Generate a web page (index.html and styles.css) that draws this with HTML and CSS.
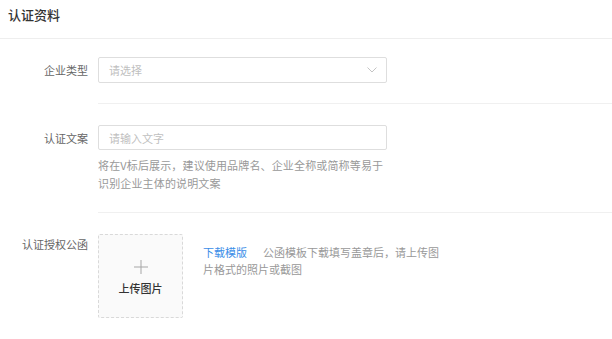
FILE: index.html
```html
<!DOCTYPE html>
<html lang="zh-CN">
<head>
<meta charset="utf-8">
<link rel="stylesheet" href="styles.css">
</head>
<body>
<div class="page">
  <div class="header"><span class="title">认证资料</span></div>
  <div class="form">
    <div class="row">
      <div class="label">企业类型</div>
      <div class="content">
        <div class="select">
          <span class="placeholder">请选择</span>
          <svg class="chevron" width="10" height="6" viewBox="0 0 10 6"><path d="M0.5 0.5 L5 5 L9.5 0.5" fill="none" stroke="#c4c4c4" stroke-width="1"/></svg>
        </div>
      </div>
    </div>
    <div class="row">
      <div class="label">认证文案</div>
      <div class="content">
        <div class="input"><span class="placeholder">请输入文字</span></div>
        <p class="help">将在V标后展示，建议使用品牌名、企业全称或简称等易于识别企业主体的说明文案</p>
      </div>
    </div>
    <div class="row row-last">
      <div class="label label-top">认证授权公函</div>
      <div class="content upload-row">
        <div class="upload">
          <svg class="plus" width="14" height="14" viewBox="0 0 14 14"><path d="M7 0 V14 M0 7 H14" stroke="#a6a6a6" stroke-width="1"/></svg>
          <span class="upload-text">上传图片</span>
        </div>
        <p class="upload-tip"><span class="link">下载模版</span>公函模板下载填写盖章后，请上传图片格式的照片或截图</p>
      </div>
    </div>
  </div>
</div>
</body>
</html>
```

FILE: styles.css
```css
* { box-sizing: border-box; }
html, body { margin: 0; padding: 0; background: #fff; }
body {
  font-family: "Noto Sans CJK SC", "Noto Sans", sans-serif;
  font-size: 11px;
  color: #666;
}
.page { width: 612px; }
.header {
  height: 39px;
  padding: 0 8px;
  border-bottom: 1px solid #eeeeee;
  display: flex;
  align-items: center;
}
.title {
  font-size: 13px;
  font-weight: 500;
  color: #333;
  line-height: 20px;
  margin-top: -8px;
}
.form { padding-top: 18px; }
.row { display: flex; gap: 10px; }
.label {
  width: 88px;
  flex: none;
  text-align: right;
  line-height: 26px;
  color: #666;
  padding-top: 0;
}
.label-top { line-height: 20px; }
.content {
  flex: 1;
  border-bottom: 1px solid #f0f0f0;
  padding-bottom: 20px;
}
.row + .row .content { padding-top: 21px; }
.row + .row .label { margin-top: 21px; }
.row-last .content { border-bottom: none; padding-top: 19px; }
.row-last .label { margin-top: 19px; }
.select, .input {
  width: 289px;
  height: 26px;
  border: 1px solid #dedede;
  border-radius: 2px;
  padding: 0 9px 0 10px;
  display: flex;
  align-items: center;
  justify-content: space-between;
}
.input { height: 25px; }
.placeholder { color: #bfbfbf; line-height: 24px; }
.chevron { display: block; }
.help {
  margin: 6px 0 0;
  width: 290px;
  line-height: 18px;
  color: #999;
  letter-spacing: 0.15px;
}
.upload-row { display: flex; align-items: flex-start; }
.upload {
  width: 85px;
  height: 84px;
  flex: none;
  border: 1px dashed #d9d9d9;
  border-radius: 2px;
  background: #fafafa;
  display: flex;
  flex-direction: column;
  align-items: center;
  padding-top: 25px;
}
.plus { display: block; }
.upload-text {
  margin-top: 6px;
  color: #333;
  font-weight: 500;
  line-height: 16px;
}
.upload-tip {
  margin: 10px 0 0 20px;
  width: 244px;
  line-height: 17px;
  color: #999;
}
.link { color: #3b8ee8; margin-right: 16px; }
```
